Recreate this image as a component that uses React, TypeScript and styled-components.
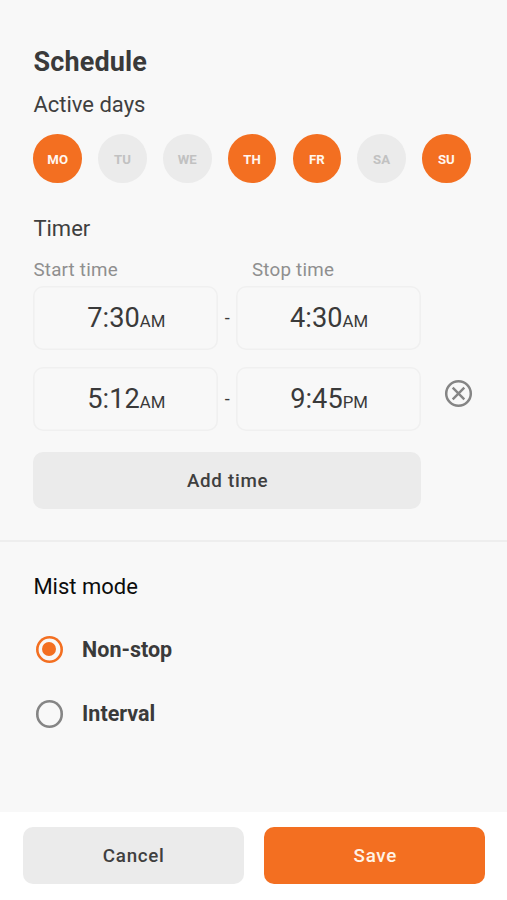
import React, { useState } from "react";
import styled, { createGlobalStyle } from "styled-components";

const GlobalStyle = createGlobalStyle`
  *, *::before, *::after { box-sizing: border-box; }
  body { margin: 0; background: #f8f8f8; font-family: Roboto, sans-serif; color: #3a3a3a; }
  button { font-family: inherit; border: 0; padding: 0; cursor: pointer; }
`;

const Screen = styled.div`
  display: flex;
  flex-direction: column;
  height: 900px;
  background: #f8f8f8;
`;

const Schedule = styled.section`
  display: flex;
  flex-direction: column;
  height: 542px;
  padding: 47px 33.4px 0;
  border-bottom: 2px solid #eeeeee;
`;

const Title = styled.h1`
  margin: 0;
  font-size: 27px;
  font-weight: 700;
  line-height: 31px;
  letter-spacing: 0.15px;
`;

const Heading = styled.h2<{ $strong?: boolean }>`
  margin: 0;
  font-size: 22px;
  font-weight: 400;
  line-height: 28px;
  letter-spacing: 0;
  color: ${(p) => (p.$strong ? "#0c0c0c" : "#3f3f3f")};
`;

const ActiveDays = styled.div`
  margin-top: 13px;
`;

const Days = styled.div`
  display: flex;
  gap: 16.2px;
  margin-top: 15.2px;
`;

const Day = styled.button<{ $active: boolean }>`
  flex: none;
  width: 48.6px;
  height: 48.6px;
  border-radius: 50%;
  padding: 2px 0 0;
  font-size: 13.2px;
  font-weight: 700;
  background: ${(p) => (p.$active ? "#f36f21" : "#ebebeb")};
  color: ${(p) => (p.$active ? "#fff6ef" : "#c1c1c1")};
`;

const Timer = styled.div`
  margin-top: 31.8px;
`;

const Labels = styled.div`
  display: grid;
  grid-template-columns: 218.6px auto;
  margin-top: 15.4px;
  font-size: 18.8px;
  line-height: 24px;
  letter-spacing: 0.22px;
  color: #8f8f8f;
`;

const TimeRow = styled.div`
  display: flex;
  align-items: center;
  height: 64px;
  margin-top: 3.8px;
  & + & { margin-top: 17px; }
`;

const TimeBox = styled.div`
  display: flex;
  align-items: baseline;
  justify-content: center;
  width: 184.8px;
  height: 64px;
  padding-left: 1px;
  box-shadow: inset 0 0 0 1.6px #f0f0f0;
  border-radius: 10px;
  font-size: 27.2px;
  line-height: 64px;
  color: #3a3a3a;
`;

const Meridiem = styled.span`
  font-size: 16.8px;
`;

const Dash = styled.span`
  width: 18px;
  text-align: center;
  font-size: 18px;
`;

const Remove = styled.button`
  display: flex;
  margin: 0 0 10.6px 23.5px;
  background: none;
  color: #858585;
`;

const Action = styled.button<{ $primary?: boolean }>`
  width: 100%;
  height: 56.6px;
  border-radius: 10px;
  padding: 1px 0 0 1px;
  font-size: 18.8px;
  font-weight: 500;
  letter-spacing: 0.7px;
  background: ${(p) => (p.$primary ? "#f36f21" : "#ebebeb")};
  color: ${(p) => (p.$primary ? "#fff3e6" : "#3f3f3f")};
`;

const AddTime = styled(Action)`
  width: 387.4px;
  margin-top: 21.7px;
`;

const MistMode = styled.section`
  flex: 1;
  padding: 31px 33.4px 0;
`;

const Options = styled.div`
  display: flex;
  flex-direction: column;
  gap: 36.6px;
  margin-top: 34.4px;
`;

const Option = styled.label`
  display: flex;
  align-items: center;
  gap: 19px;
  height: 28px;
  padding-left: 2.3px;
  font-size: 21.5px;
  font-weight: 700;
  line-height: 27px;
  cursor: pointer;
  input { position: absolute; opacity: 0; pointer-events: none; }
`;

const Radio = styled.span<{ $checked: boolean }>`
  display: grid;
  place-items: center;
  width: 27.4px;
  height: 27.4px;
  box-shadow: inset 0 0 0 2.6px ${(p) => (p.$checked ? "#f36f21" : "#858585")};
  border-radius: 50%;
  &::after {
    content: "";
    width: 14px;
    height: 14px;
    border-radius: 50%;
    background: ${(p) => (p.$checked ? "#f36f21" : "transparent")};
  }
`;

const Footer = styled.footer`
  display: flex;
  gap: 20.4px;
  height: 88px;
  padding: 15.2px 21.6px 0 22.6px;
  background: #fff;
`;

const dayNames = ["MO", "TU", "WE", "TH", "FR", "SA", "SU"];
const periods = [
  { start: ["7:30", "AM"], stop: ["4:30", "AM"] },
  { start: ["5:12", "AM"], stop: ["9:45", "PM"] },
];

const RemoveIcon = () => (
  <svg width="29" height="29" viewBox="0 0 29 29" fill="none" stroke="currentColor">
    <circle cx="14.5" cy="14.5" r="12.3" strokeWidth="2.5" />
    <path d="M8.7 8.7l11.6 11.6M20.3 8.7L8.7 20.3" strokeWidth="2.4" />
  </svg>
);

function Time({ value }: { value: string[] }) {
  return (
    <TimeBox>
      <span>{value[0]}</span>
      <Meridiem>{value[1]}</Meridiem>
    </TimeBox>
  );
}

export default function App() {
  const [active, setActive] = useState(["MO", "TH", "FR", "SU"]);
  const [mode, setMode] = useState("Non-stop");
  const toggle = (day: string) =>
    setActive((days) => (days.includes(day) ? days.filter((d) => d !== day) : [...days, day]));

  return (
    <Screen>
      <GlobalStyle />
      <Schedule>
        <Title>Schedule</Title>
        <ActiveDays>
          <Heading>Active days</Heading>
          <Days>
            {dayNames.map((day) => (
              <Day key={day} $active={active.includes(day)} onClick={() => toggle(day)}>
                {day}
              </Day>
            ))}
          </Days>
        </ActiveDays>
        <Timer>
          <Heading>Timer</Heading>
          <Labels>
            <span>Start time</span>
            <span>Stop time</span>
          </Labels>
          {periods.map((period, i) => (
            <TimeRow key={i}>
              <Time value={period.start} />
              <Dash>-</Dash>
              <Time value={period.stop} />
              {i > 0 && (
                <Remove aria-label="Remove time">
                  <RemoveIcon />
                </Remove>
              )}
            </TimeRow>
          ))}
          <AddTime>Add time</AddTime>
        </Timer>
      </Schedule>
      <MistMode>
        <Heading $strong>Mist mode</Heading>
        <Options>
          {["Non-stop", "Interval"].map((name) => (
            <Option key={name}>
              <input type="radio" name="mode" checked={mode === name} onChange={() => setMode(name)} />
              <Radio $checked={mode === name} />
              {name}
            </Option>
          ))}
        </Options>
      </MistMode>
      <Footer>
        <Action>Cancel</Action>
        <Action $primary>Save</Action>
      </Footer>
    </Screen>
  );
}
